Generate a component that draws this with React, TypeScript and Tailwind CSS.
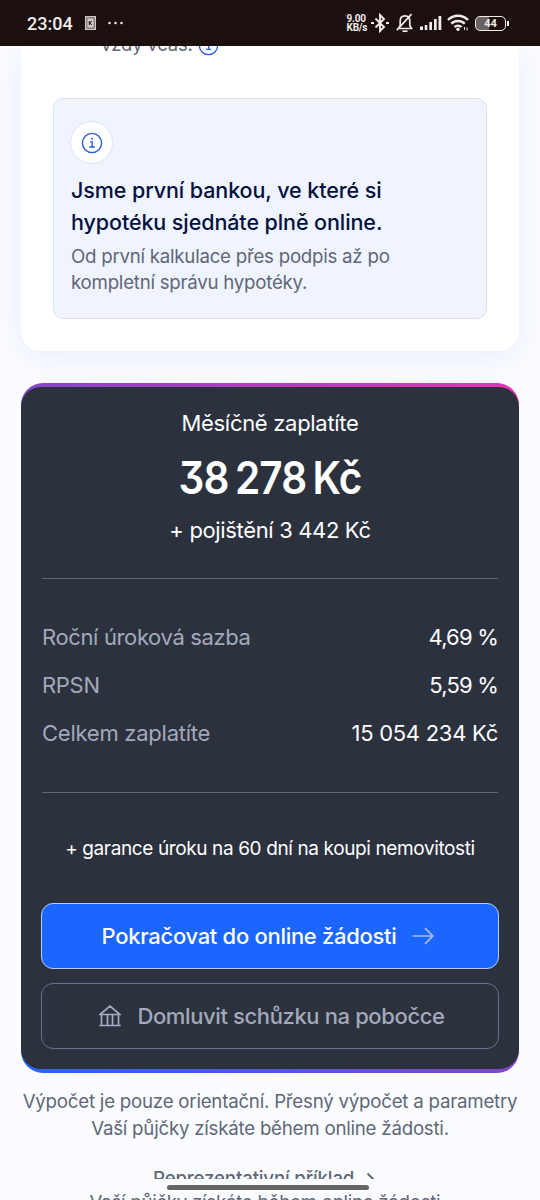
import React from 'react';

const rates = [
  { label: 'Roční úroková sazba', value: '4,69 %', labelClass: 'tracking-[-0.37px]', valueClass: 'tracking-[-0.8px]' },
  { label: 'RPSN', value: '5,59 %', labelClass: 'tracking-[-0.3px]', valueClass: 'tracking-[-0.8px]' },
  { label: 'Celkem zaplatíte', value: '15 054 234 Kč', labelClass: 'tracking-[-0.25px]', valueClass: 'tracking-[-0.27px]' },
];

const InfoIcon = ({ size }: { size: number }) => (
  <svg width={size} height={size} viewBox="0 0 22 22" fill="none" stroke="#2b5fd9" strokeWidth="1.4">
    <circle cx="11" cy="11" r="9.6" />
    <path d="M9 9.9h2.2v5M8.2 15h5.8" />
    <circle cx="11" cy="6.7" r="1" fill="#2b5fd9" stroke="none" />
  </svg>
);

const BankIcon = () => (
  <svg width="22" height="22" viewBox="0 0 22 22" fill="none" stroke="#a3acc0" strokeWidth="1.7">
    <path d="M1 9.5 11 1.2l10 8.3zM2.5 9.500V20.500M8.500 9.500V20.500M13.500 9.500V20.500M19.500 9.500V20.500M0.300 20.500h21.400" />
  </svg>
);

const ArrowIcon = () => (
  <svg width="22" height="18" viewBox="0 0 22 18" fill="none" stroke="#a9bfe6" strokeWidth="1.7">
    <path d="M0.500 9h20M13 1.200 20.800 9 13 16.800" />
  </svg>
);

const StatusBar: React.FC = () => (
  <header className="relative z-10 flex h-[46px] shrink-0 items-center bg-[#1b100e] pl-[27px] pr-[31px] font-[Roboto] text-[#f1ebe9]">
    <span className="mt-px w-[58px] text-[18px] font-medium leading-none">23:04</span>
    <svg width="11" height="14" viewBox="0 0 11 14">
      <path d="M0 0h11v14H0z" fill="#cfc8c5" />
      <path d="M1.800 1.800h7.400v10.400H1.800z" fill="none" stroke="#4b403d" strokeWidth="0.800" />
      <path d="M4.300 5v4M6.900 5 4.800 7l2.100 2" stroke="#1b100e" fill="none" />
    </svg>
    <svg className="ml-3" width="16" height="4" viewBox="0 0 16 4" fill="#e8e2e0">
      <circle cx="1.500" cy="2" r="1.300" />
      <circle cx="7.500" cy="2" r="1.300" />
      <circle cx="13.500" cy="2" r="1.300" />
    </svg>
    <div className="ml-auto flex items-center">
      <span className="w-[24px] text-[10px] font-bold leading-[9px] tracking-[-0.2px]">9.00<br />KB/s</span>
      <svg width="18" height="20" viewBox="0 0 18 20" fill="none" stroke="currentColor" strokeWidth="1.900">
        <path d="M4.500 5.500 13 14l-4 4V2l4 4-8.500 8.500" />
        <path d="M0 10h3M15 10h3" />
      </svg>
      <svg className="ml-[7px]" width="18" height="20" viewBox="0 0 18 20" fill="none" stroke="currentColor" strokeWidth="1.700">
        <path d="M2.500 15.500h13l-1.700-3V8c0-3.300-1.800-5.200-4.800-5.200S4.200 4.700 4.200 8v4.500zM0.800 17.200 15.500 1.200" />
        <path d="M6.500 18.200h5" />
      </svg>
      <svg className="ml-[6.500px]" width="22" height="16" viewBox="0 0 22 16" fill="currentColor">
        <path d="M0 11.500h3V15H0zM4.700 10h2.600v5H4.700zM9.300 7h2.700v8H9.300zM14 4h2.700v11H14zM18.500 1h2.800v14h-2.800z" />
      </svg>
      <svg className="ml-[5px]" width="22" height="18" viewBox="0 0 22 18" fill="none" stroke="currentColor" strokeWidth="2.500">
        <path d="M1 6a14 14 0 0 1 20 0M4.300 9.700a9.500 9.500 0 0 1 13.400 0M7.500 13.200a5 5 0 0 1 7 0" />
        <circle cx="11" cy="15.200" r="1.700" fill="currentColor" stroke="none" />
        <path d="M17.500 13v3M20 13.500v3" strokeWidth="1" />
      </svg>
      <div className="ml-[6px] flex h-[15px] w-[31px] items-center justify-center rounded-[5px] border-[1.500px] border-current bg-[linear-gradient(90deg,#6b6361_44%,transparent_44%)] text-[11px] font-bold leading-none">44</div>
      <div className="ml-px h-[5px] w-[2px] bg-current" />
    </div>
  </header>
);

const App: React.FC = () => {
  return (
    <div className="relative flex h-[1200px] w-[540px] flex-col overflow-hidden bg-[#fbfcff] font-[Inter,'Liberation_Sans',sans-serif]">
      <StatusBar />

      <section className="mx-[21px] h-[305px] shrink-0 rounded-b-[20px] bg-white px-8 shadow-[0_6px_30px_rgba(60,120,230,0.110)]">
        <div className="-mt-[14px] flex h-[26px] items-center gap-[5px] pl-[48px] text-[18.500px] tracking-[-0.2px] text-[#5f6779]">
          vždy včas. <InfoIcon size={21} />
        </div>
        <div className="mt-[40px] h-[221px] rounded-[10px] border border-[#d5e0f2] bg-[#f0f4fe] px-[17px] pt-[22px]">
          <div className="-ml-px flex h-[43px] w-[43px] items-center justify-center rounded-full border border-[#dbe3f4] bg-white">
            <InfoIcon size={22} />
          </div>
          <h2 className="mt-[10px] whitespace-nowrap text-[21.500px] font-medium leading-8 tracking-[-0.09px] text-[#02103f]">
            Jsme první bankou, ve které si<br />hypotéku sjednáte plně online.
          </h2>
          <p className="mt-[6px] whitespace-nowrap text-[18.700px] leading-[26.200px] tracking-[-0.25px] text-[#5f6779]">
            Od první kalkulace přes podpis až po<br />kompletní správu hypotéky.
          </p>
        </div>
      </section>

      <section className="mx-[21px] mt-8 h-[690px] shrink-0 rounded-[22px] bg-[linear-gradient(to_top_right,#2466f5,#8347c9_50%,#e633b0)] py-1">
        <div className="h-full rounded-[20px] bg-[#2c313e] px-[21px] pt-5 text-center text-white">
          <p className="text-[22px] leading-8 tracking-[-0.3px]">Měsíčně zaplatíte</p>
          <p className="mt-[11px] scale-x-[0.9] whitespace-nowrap text-[45px] font-semibold leading-[56px] tracking-[-0.9px] [font-feature-settings:'cv09'] [word-spacing:-3.500px]">38 278 Kč</p>
          <p className="mt-[8px] text-[22px] leading-8 tracking-[-0.35px]">+ pojištění 3 442 Kč</p>
          <dl className="mt-8 flex h-[215px] flex-col justify-center gap-4 border-y border-[#5d697d] pb-[2px] text-[22px] leading-8">
            {rates.map((rate) => (
              <div key={rate.label} className="flex justify-between">
                <dt className={`text-[#a3a9ba] ${rate.labelClass}`}>{rate.label}</dt>
                <dd className={rate.valueClass}>{rate.value}</dd>
              </div>
            ))}
          </dl>
          <p className="mt-10 whitespace-nowrap text-[19px] leading-8 tracking-[-0.38px]">+ garance úroku na 60 dní na koupi nemovitosti</p>
          <button className="-mx-px mt-[38px] flex h-[66px] w-[458px] items-center justify-center gap-4 rounded-xl border border-[#b4ccff] bg-[#1b66ff] pr-1 text-[22px] font-medium tracking-[-0.3px]">
            <span>Pokračovat do online žádosti</span>
            <ArrowIcon />
          </button>
          <button className="-mx-px mt-[14px] flex h-[66px] w-[458px] items-center justify-center gap-4 rounded-xl border border-[#66728a] pl-1 text-[22px] font-medium tracking-[-0.38px] text-[#a3a9ba]">
            <BankIcon />
            <span>Domluvit schůzku na pobočce</span>
          </button>
        </div>
      </section>

      <p className="mt-4 shrink-0 whitespace-nowrap text-center text-[18.700px] leading-[26.500px] tracking-[-0.23px] text-[#5f6779]">
        Výpočet je pouze orientační. Přesný výpočet a parametry<br />Vaší půjčky získáte během online žádosti.
      </p>

      {/* cut off by the gesture area */}
      <div className="mt-6 flex h-[13px] shrink-0 items-start gap-3 overflow-hidden pl-[153px] text-[18.700px] font-medium leading-[26.500px] tracking-[-0.17px] text-[#5f6779]">
        Reprezentativní příklad
        <svg className="mt-[7px]" width="9" height="14" viewBox="0 0 9 14" fill="none" stroke="currentColor" strokeWidth="2">
          <path d="M1.500 0.500 8 7l-6.500 6.500" />
        </svg>
      </div>
      <div className="ml-[167px] mt-[6px] h-[5px] w-[202px] shrink-0 rounded-full bg-[#666]" />
      <p className="h-[10px] shrink-0 overflow-hidden whitespace-nowrap pr-[5px] text-center text-[18.700px] leading-[26.500px] tracking-[-0.270px] text-[#5f6779]">
        Vaší půjčky získáte během online žádosti.
      </p>
    </div>
  );
};

export default App;
